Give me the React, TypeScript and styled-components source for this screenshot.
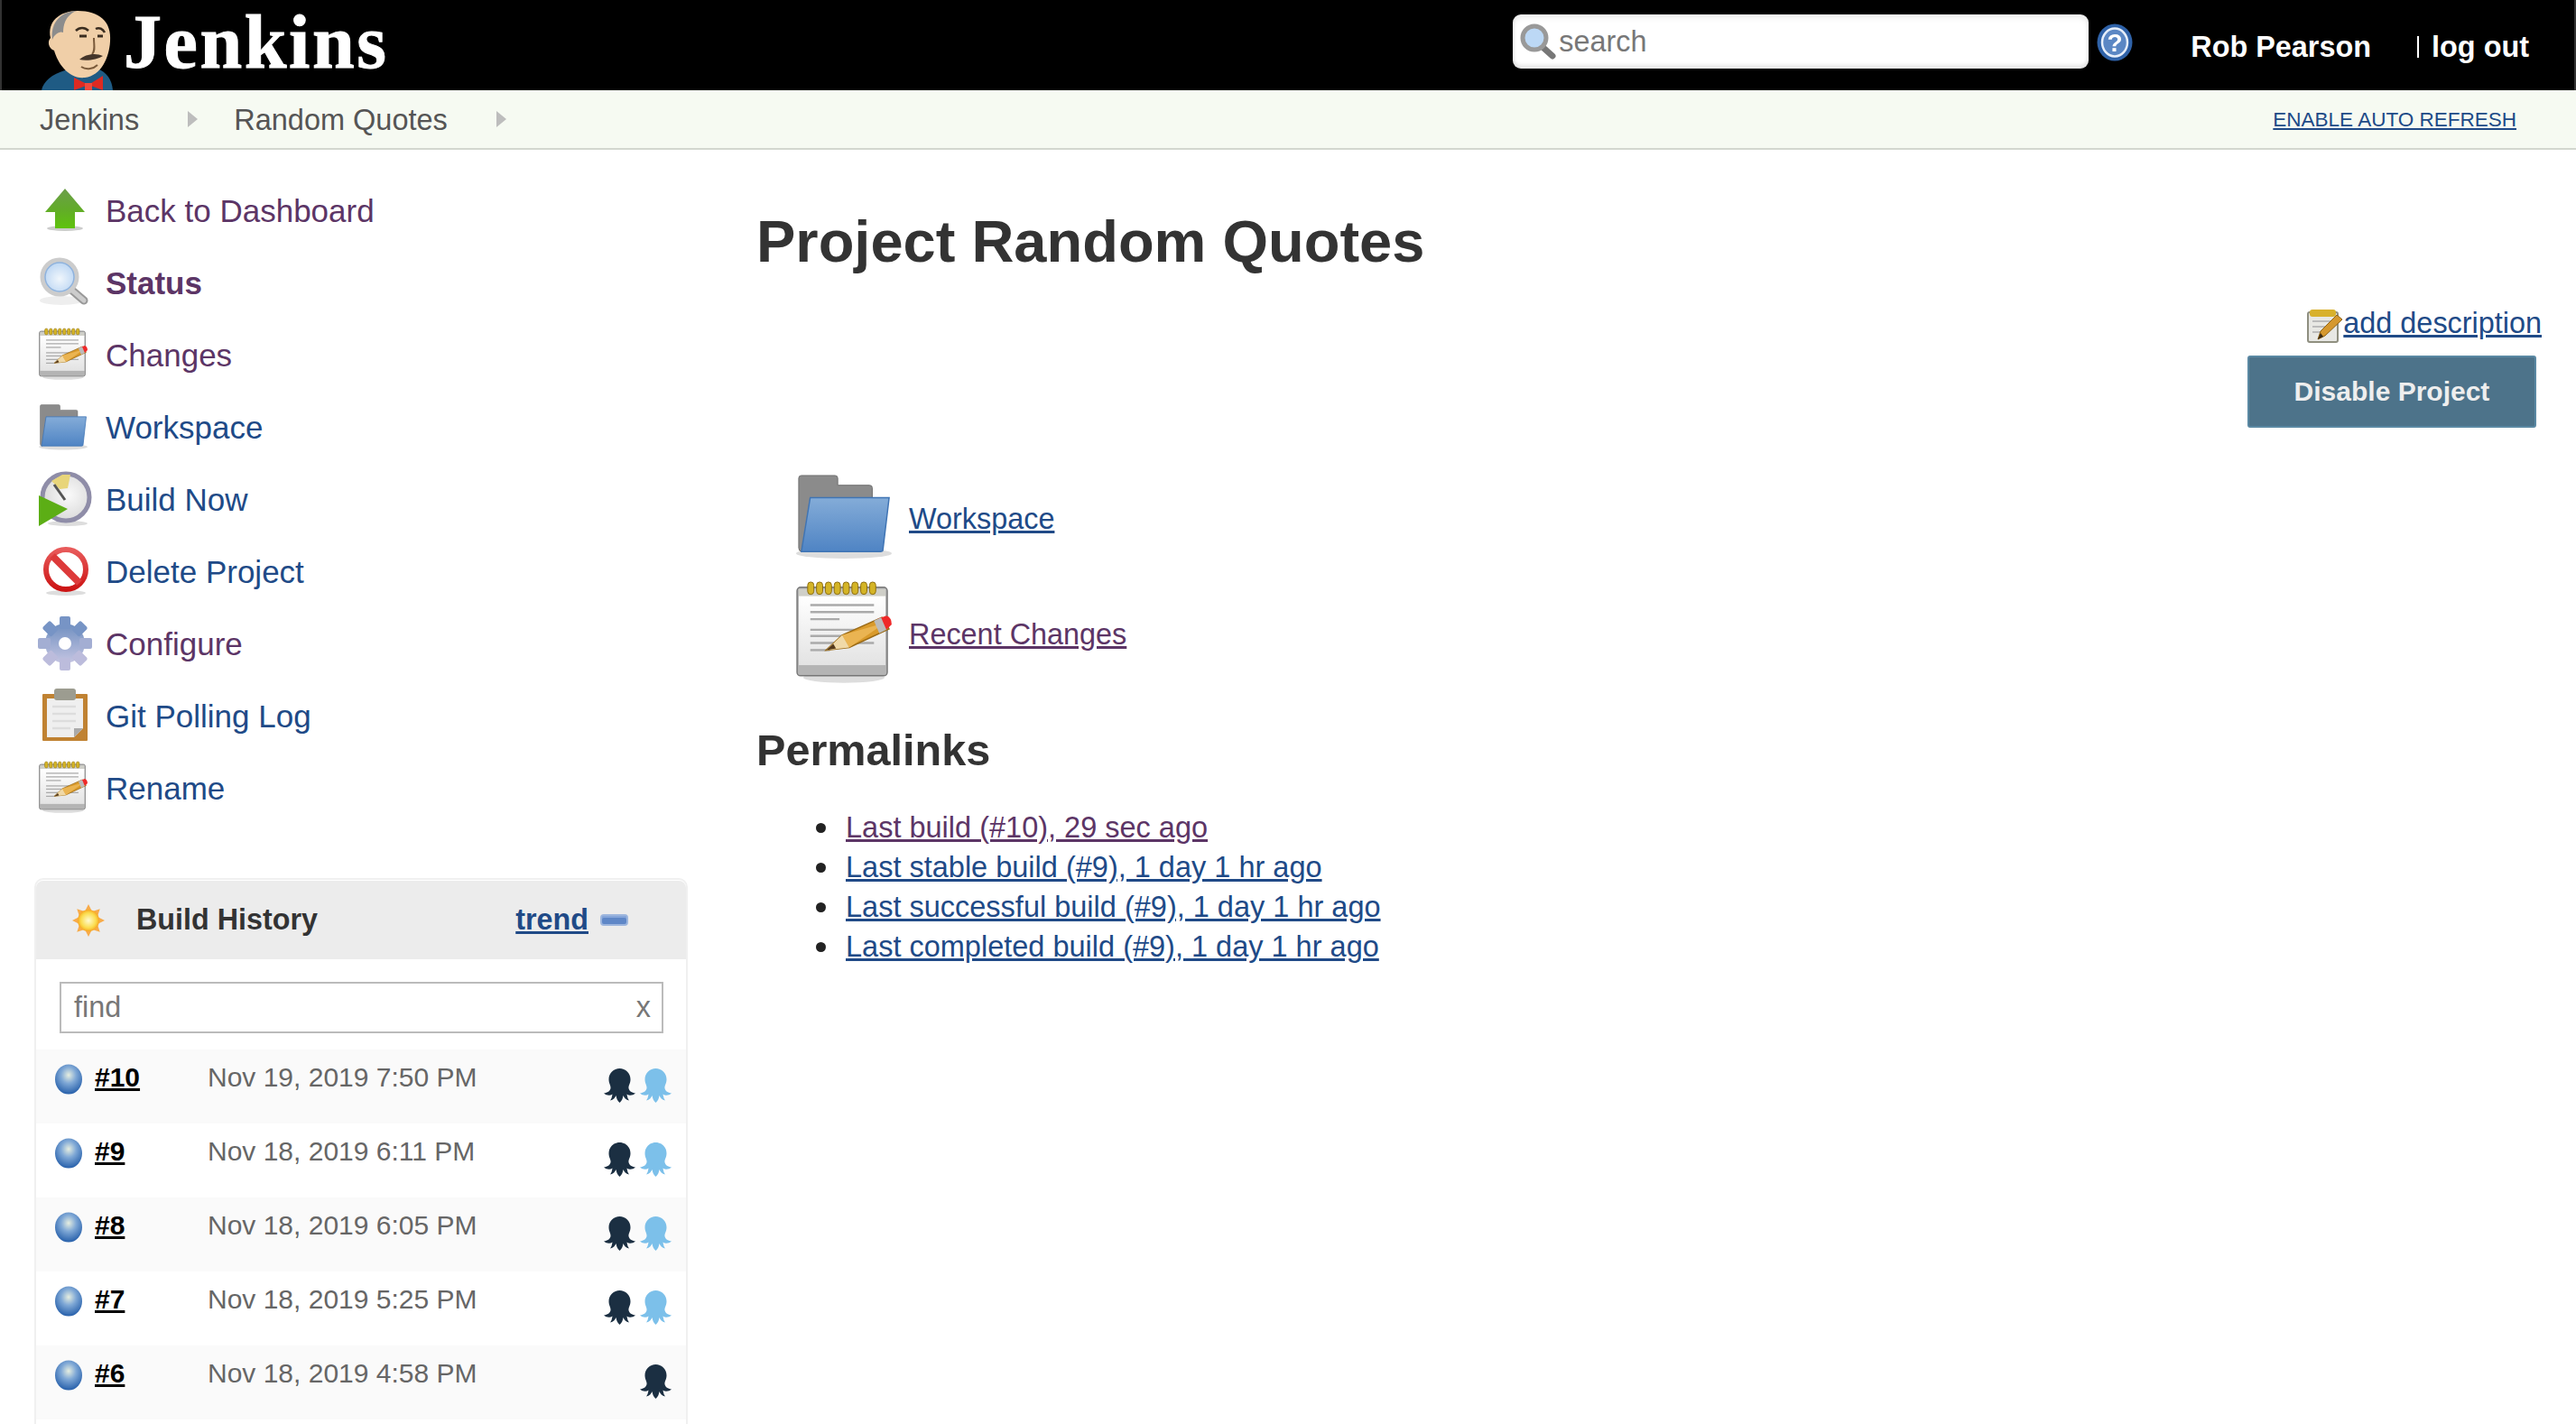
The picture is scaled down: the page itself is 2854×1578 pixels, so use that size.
import React from 'react';
import styled, { createGlobalStyle } from 'styled-components';

const Global = createGlobalStyle`
  html, body { margin: 0; padding: 0; background: #fff; }
  body { font-family: "Liberation Sans", Arial, sans-serif; color: #333; overflow: hidden; }
  * { box-sizing: border-box; }
`;

const BLUE = '#204a87';
const PURPLE = '#5c3566';

const Page = styled.div`
  width: 2854px; height: 1578px; overflow: hidden; display: flex; flex-direction: column;
`;
const Header = styled.header`
  height: 100px; flex: none; background: #000; display: flex; align-items: flex-start;
  border-left: 2px solid #333; border-right: 2px solid #333; padding-left: 42px; overflow: hidden;
`;
const LogoArt = styled.svg`
  width: 84px; height: 90px; margin-top: 10px; flex: none; filter: blur(0.6px);
`;
const LogoText = styled.div`
  font-family: "Liberation Serif", "Times New Roman", serif; font-weight: 700; font-size: 84px;
  line-height: 84px; color: #fff; margin: 5px 0 0 9px; letter-spacing: 2.6px; -webkit-text-stroke: 1px #fff;
`;
const Spacer = styled.div` flex: 1; `;
const SearchBox = styled.div`
  width: 638px; height: 60px; margin-top: 16px; background: #fff; border-radius: 9px; display: flex; align-items: center;
  padding-left: 7px; box-shadow: inset 0 4px 6px rgba(0,0,0,.08), inset 0 -4px 4px rgba(0,0,0,.1);
`;
const SearchInput = styled.input`
  flex: 1; min-width: 0; height: 44px; border: 0; outline: 0; background: transparent; padding: 0 0 0 2px;
  font: 32.400px "Liberation Sans", sans-serif; color: #777;
  &::placeholder { color: #777; opacity: 1; }
`;
const HelpWrap = styled.div` margin: 26px 0 0 9px; width: 40px; height: 42px; flex: none; `;
const UserName = styled.div`
  margin: 34px 0 0 64px; font-size: 32.400px; line-height: 36px; font-weight: 700; color: #fff; white-space: nowrap;
`;
const LogOut = styled.div`
  margin: 34px 50px 0 51px; font-size: 32.400px; line-height: 36px; font-weight: 700; color: #fff; display: flex; align-items: center; white-space: nowrap;
  &::before { content: ''; width: 2px; height: 24px; background: #fff; margin-right: 14px; }
`;
const Crumbs = styled.nav`
  height: 66px; flex: none; background: #f6faf2; border-bottom: 2px solid #d3d7cf; display: flex; align-items: center;
  padding: 2px 66px 0 44px; font-size: 32.500px; color: #555;
`;
const Crumb = styled.span` white-space: nowrap; `;
const CrumbArrow = styled.span`
  width: 0; height: 0; border-left: 11px solid #bdbdbd; border-top: 9px solid transparent; border-bottom: 9px solid transparent;
  margin: -2px 40px 0 54px;
`;
const AutoRefresh = styled.a`
  margin-left: auto; font-size: 22.500px; color: ${BLUE}; text-decoration: underline; white-space: nowrap;
`;
const Main = styled.div` flex: 1; display: flex; min-height: 0; `;
const Side = styled.aside`
  width: 838px; flex: none; padding-top: 27px; display: flex; flex-direction: column;
`;
const NavList = styled.div` display: flex; flex-direction: column; padding-left: 42px; `;
const NavRow = styled.a<{ $visited?: boolean; $bold?: boolean }>`
  height: 80px; display: flex; align-items: center; font-size: 35px; white-space: nowrap; padding-top: 1px;
  color: ${p => (p.$visited ? PURPLE : BLUE)}; font-weight: ${p => (p.$bold ? 700 : 400)};
`;
const NavIcon = styled.span`
  width: 75px; flex: none; display: flex; align-items: center; margin-top: -1px;
  svg { display: block; filter: blur(0.6px); }
`;
const ArrowSlot = styled.span` margin-left: 7px; display: block; `;
const HistoryBox = styled.section`
  width: 724px; margin: 60px 0 0 38px; border: 2px solid #f0f0f0; border-radius: 10px 10px 0 0; padding-bottom: 80px; background: #fff;
`;
const HistoryHead = styled.div`
  height: 87px; background: #ececec; border-radius: 8px 8px 0 0; display: flex; align-items: center; padding-left: 40px;
  font-size: 32.300px; font-weight: 700; color: #333; margin-top: 1px;
`;
const HistoryTitle = styled.span` margin-left: 35px; `;
const Trend = styled.a`
  margin-left: auto; color: ${BLUE}; text-decoration: underline;
`;
const FoldIcon = styled.span`
  width: 31px; height: 13px; margin: 0 64px 0 13px; border-radius: 4px; background: #5f87c7; border: 2px solid #9db6de;
  box-shadow: inset 0 2px 0 #86a6da;
`;
const FindWrap = styled.div` padding: 25px 25px 18px 26px; `;
const FindBox = styled.div`
  height: 57px; border: 2px solid #bbb; display: flex; align-items: center; padding: 0 12px 0 14px;
  font-size: 32.400px; color: #777; justify-content: space-between;
`;
const Row = styled.div<{ $odd: boolean }>`
  height: 82px; display: flex; align-items: flex-start; background: ${p => (p.$odd ? '#fafafa' : '#fff')}; padding: 15px 16px 0 20px;
`;
const BuildNo = styled.a`
  width: 125px; margin: -2px 0 0 12px; font-size: 30px; font-weight: 700; line-height: 36px; color: #000; text-decoration: underline; flex: none;
`;
const BuildDate = styled.span`
  margin-top: -1px; font-size: 30px; line-height: 34px; color: #666; white-space: nowrap;
`;
const Octos = styled.span`
  margin-left: auto; display: flex; gap: 5px; margin-top: 6px;
`;
const Content = styled.main`
  flex: 1; min-width: 0; padding: 62px 38px 0 0; display: flex; flex-direction: column;
`;
const Title = styled.h1`
  margin: 0; font-size: 65px; line-height: 80px; font-weight: 700; color: #333; white-space: nowrap;
`;
const DescRow = styled.div`
  margin: 28px 0 0; height: 44px; display: flex; justify-content: flex-end; align-items: center; font-size: 32.400px;
  svg { display: block; flex: none; margin-top: 6px; filter: blur(0.4px); }
`;
const TextLink = styled.a<{ $visited?: boolean }>`
  color: ${p => (p.$visited ? PURPLE : BLUE)}; text-decoration: underline; white-space: nowrap;
`;
const ButtonRow = styled.div` margin-top: 14px; display: flex; justify-content: flex-end; padding-right: 6px; `;
const PrimaryButton = styled.button`
  width: 320px; height: 80px; background: #4d738a; border: 2px solid #5a88a3; border-radius: 3px; color: #eee;
  font: 700 30px "Liberation Sans", sans-serif;
`;
const BigLinks = styled.div` margin-top: 50px; display: flex; flex-direction: column; gap: 24px; padding-left: 42px; `;
const BigLink = styled.div<{ $h: number }>`
  display: flex; align-items: center; height: ${p => p.$h}px; font-size: 32.400px;
  svg { display: block; flex: none; margin-right: 17px; filter: blur(0.4px); }
`;
const BigLabel = styled.span<{ $drop: number }>` padding-top: ${p => p.$drop}px; `;
const SubTitle = styled.h2`
  margin: 43px 0 0; font-size: 48.600px; line-height: 60px; font-weight: 700; color: #333;
`;
const PermaList = styled.ul`
  margin: 34px 0 0; padding: 0 0 0 66px; font-size: 32.500px; line-height: 44px; list-style: none;
`;
const PermaItem = styled.li`
  display: flex; align-items: center;
  &::before { content: ''; width: 11px; height: 11px; border-radius: 50%; background: #222; margin-right: 22px; flex: none; }
`;

const Octo = ({ color }: { color: string }) => (
  <svg width="35" height="38" viewBox="0 0 35 38" fill={color}>
    <path d="M5.500 12C5.500 5 11 0 17.500 0S29.500 5 29.500 12C29.500 17 27 19 27.500 22 28 25 31 27 35 27.500 32 30 28 30.500 25.500 28.500 26 31.500 26.500 33.500 28 35.500 24.500 35 22.500 32.500 21.500 30 21 33 20 36 17.500 38 15 36 14 33 13.500 30 12.500 32.500 10.500 35 7 35.500 8.500 33.500 9 31.500 9.500 28.500 7 30.500 3 30 0 27.500 4 27 7 25 7.500 22 8 19 5.500 17 5.500 12z" />
  </svg>
);

const BallSvg = styled.svg` filter: blur(0.7px); display: block; flex: none; `;
const Ball = () => (
  <BallSvg width="33" height="36" viewBox="0 0 33 36">
    <defs>
      <radialGradient id="ballG" cx="50%" cy="36%" r="62%">
        <stop offset="0" stopColor="#e6eee0" />
        <stop offset=".45" stopColor="#7fa8d6" />
        <stop offset="1" stopColor="#2c64ad" />
      </radialGradient>
    </defs>
    <ellipse cx="16" cy="18" rx="15" ry="16.500" fill="url(#ballG)" />
  </BallSvg>
);

const ArrowIcon = () => (
  <svg width="46" height="50" viewBox="0 0 46 50">
    <defs>
      <linearGradient id="arG" x1="0" y1="0" x2="0" y2="1">
        <stop offset="0" stopColor="#6c9e4b" />
        <stop offset=".5" stopColor="#62ab2a" />
        <stop offset="1" stopColor="#5fc30c" />
      </linearGradient>
    </defs>
    <ellipse cx="23" cy="45" rx="20" ry="3" fill="#ccc" />
    <path d="M23 1 45 27H34V45H12V27H1z" fill="url(#arG)" />
  </svg>
);

const Magnifier = () => (
  <svg width="58" height="56" viewBox="0 0 58 56">
    <defs>
      <radialGradient id="mgG" cx="50%" cy="55%" r="55%">
        <stop offset="0" stopColor="#f0f6fc" />
        <stop offset="1" stopColor="#b5d2f2" />
      </radialGradient>
    </defs>
    <ellipse cx="26" cy="48" rx="24" ry="5" fill="#eee" />
    <line x1="37" y1="36" x2="51" y2="48" stroke="#999" strokeWidth="9" strokeLinecap="round" />
    <line x1="37" y1="36" x2="51" y2="48" stroke="#ccc" strokeWidth="5" strokeLinecap="round" />
    <circle cx="24" cy="22" r="19" fill="url(#mgG)" stroke="#ccc" strokeWidth="5" />
    <circle cx="24" cy="22" r="16" fill="none" stroke="#8fb2dc" strokeWidth="1.500" />
  </svg>
);

const Notepad = ({ size = 56, id }: { size?: number; id: string }) => (
  <svg width={size} height={size * 1.06} viewBox="0 0 112 119">
    <defs>
      <linearGradient id={id} x1="0" y1="0" x2="0" y2="1">
        <stop offset="0" stopColor="#fff" />
        <stop offset="1" stopColor="#e3e3e3" />
      </linearGradient>
    </defs>
    <ellipse cx="56" cy="110" rx="46" ry="6" fill="#ddd" />
    <rect x="3" y="8" width="102" height="100" rx="4" fill="#b4b4b4" stroke="#777" strokeWidth="1.500" />
    <rect x="5" y="10" width="98" height="10" fill="#cfcfc8" />
    <rect x="5" y="18" width="98" height="78" fill={`url(#${id})`} />
    {[0, 1, 2, 3, 4, 5, 6, 7].map(i => (
      <rect key={i} x={15 + i * 10} y="2" width="7" height="14" rx="3.500" fill="#d4b426" stroke="#8c6d10" strokeWidth="1" />
    ))}
    <g stroke="#aaa" strokeWidth="2.500">
      <line x1="18" y1="28" x2="90" y2="28" />
      <line x1="18" y1="36" x2="90" y2="36" />
      <line x1="18" y1="44" x2="51" y2="44" />
      <line x1="18" y1="56" x2="70" y2="56" />
      <line x1="18" y1="63" x2="55" y2="63" />
      <line x1="18" y1="71" x2="90" y2="71" />
      <line x1="18" y1="79" x2="40" y2="79" />
    </g>
    <path d="M36 79 54 62 99 42 107 55 62 76z" fill="#d99a2b" stroke="#9a6a16" strokeWidth="1.500" />
    <path d="M54 62 103 48 62 76z" fill="#eab452" />
    <path d="M36 79 54 62 62 76z" fill="#f0d9a8" />
    <path d="M36 79 44 72 47 77z" fill="#55391a" />
    <path d="M94 44 104 40Q110 42 110 50L104 56z" fill="#ef2929" />
    <path d="M90 46 98 42 104 56 96 60z" fill="#bbb" />
  </svg>
);

const EditIcon = () => (
  <svg width="40" height="38" viewBox="0 0 40 38">
    <rect x="1" y="4" width="33" height="33" rx="2" fill="#e8e8e4" stroke="#8f8f80" strokeWidth="2" />
    <rect x="3" y="1" width="29" height="8" rx="3" fill="#d8b12c" />
    <g stroke="#bbb" strokeWidth="2">
      <line x1="6" y1="14" x2="28" y2="14" />
      <line x1="6" y1="20" x2="22" y2="20" />
      <line x1="6" y1="26" x2="16" y2="26" />
    </g>
    <path d="M12 34 15 25 33 7 39 12 20 30z" fill="#d5982e" stroke="#8f6315" strokeWidth="1" />
    <path d="M12 34 15 27 18 31z" fill="#3a2a14" />
  </svg>
);

const Folder = ({ w, h, id }: { w: number; h: number; id: string }) => (
  <svg width={w} height={h} viewBox="0 0 112 98" preserveAspectRatio="none">
    <defs>
      <linearGradient id={id} x1="0" y1="0" x2="0" y2="1">
        <stop offset="0" stopColor="#84acd8" />
        <stop offset="1" stopColor="#4f84c4" />
      </linearGradient>
    </defs>
    <ellipse cx="56" cy="91" rx="54" ry="6" fill="#ddd" />
    <path d="M5 6a3 3 0 0 1 3-3H46a3 3 0 0 1 3 3V14H85a3 3 0 0 1 3 3V40L9 89Q5 89 5 85z" fill="#8b8b8b" stroke="#6f6f6f" strokeWidth="1" />
    <path d="M18 28H107L100 87Q100 89 97 89H8z" fill={`url(#${id})`} stroke="#3f74b4" strokeWidth="1.500" />
  </svg>
);

const ClockIcon = () => (
  <svg width="60" height="62" viewBox="0 0 60 62">
    <defs>
      <radialGradient id="ckG" cx="55%" cy="45%" r="60%">
        <stop offset="0" stopColor="#fafafa" />
        <stop offset="1" stopColor="#d8d8d8" />
      </radialGradient>
    </defs>
    <ellipse cx="33" cy="58" rx="22" ry="3" fill="#ddd" />
    <circle cx="31" cy="29" r="26" fill="url(#ckG)" stroke="#8f8da8" strokeWidth="5" />
    <path d="M27 4 36 4 33 19 24 20 15 11z" fill="#e8d57a" />
    <path d="M18 15 30 32" stroke="#555" strokeWidth="3" />
    <path d="M1 27 33 42 1 61z" fill="#5cae15" />
  </svg>
);

const DeleteSvg = styled.svg` margin-left: 4px; `;
const DeleteIcon = () => (
  <DeleteSvg width="54" height="56" viewBox="0 0 54 56">
    <defs>
      <linearGradient id="dlG" x1="0" y1="0" x2="0" y2="1">
        <stop offset="0" stopColor="#e85a5a" />
        <stop offset="1" stopColor="#cc1414" />
      </linearGradient>
    </defs>
    <ellipse cx="27" cy="52" rx="22" ry="3" fill="#ddd" />
    <circle cx="27" cy="26" r="22" fill="#fff" stroke="url(#dlG)" strokeWidth="6" />
    <line x1="12" y1="11" x2="42" y2="41" stroke="#dd3a3a" strokeWidth="8" />
  </DeleteSvg>
);

const GearIcon = () => (
  <svg width="60" height="60" viewBox="0 0 60 60">
    <defs>
      <linearGradient id="geG" x1="0" y1="0" x2="0" y2="1">
        <stop offset="0" stopColor="#6f8fc0" />
        <stop offset="1" stopColor="#c5c5e2" />
      </linearGradient>
    </defs>
    <circle cx="30" cy="30" r="22" fill="url(#geG)" />
    {[0, 45, 90, 135, 180, 225, 270, 315].map((a, i) => (
      <rect key={a} x="24" y="0" width="12" height="14" rx="2" fill={i > 2 && i < 6 ? '#bcbcdc' : i === 2 || i === 6 ? '#a3aed3' : '#7794c5'} transform={`rotate(${a} 30 30)`} />
    ))}
    <circle cx="30" cy="30" r="7" fill="#fff" />
  </svg>
);

const ClipSvg = styled.svg` margin-left: 4px; `;
const ClipboardIcon = () => (
  <ClipSvg width="54" height="60" viewBox="0 0 54 60">
    <rect x="1" y="6" width="50" height="52" rx="1" fill="#c08232" />
    <path d="M6 11H46V44L36 54H6z" fill="#efefef" />
    <path d="M46 44 36 54V44z" fill="#aaa" />
    <rect x="14" y="0" width="24" height="13" rx="3" fill="#9c9c90" />
    <g stroke="#ddd" strokeWidth="2.500">
      <line x1="12" y1="20" x2="38" y2="20" />
      <line x1="12" y1="28" x2="38" y2="28" />
      <line x1="12" y1="36" x2="38" y2="36" />
      <line x1="12" y1="44" x2="32" y2="44" />
    </g>
  </ClipSvg>
);

const SunSvg = styled.svg` display: block; flex: none; filter: blur(0.5px); `;
const Sun = () => (
  <SunSvg width="36" height="36" viewBox="0 0 36 36">
    <defs>
      <radialGradient id="snG" cx="50%" cy="50%" r="50%">
        <stop offset="0" stopColor="#fffbd0" />
        <stop offset=".7" stopColor="#fbdc4c" />
        <stop offset="1" stopColor="#f6a623" />
      </radialGradient>
    </defs>
    {[0, 45, 90, 135, 180, 225, 270, 315].map(a => (
      <path key={a} d="M18 0 22 8H14z" fill="#f7ab4a" transform={`rotate(${a} 18 18)`} />
    ))}
    <circle cx="18" cy="18" r="12" fill="url(#snG)" />
  </SunSvg>
);

const GlyphSvg = styled.svg` flex: none; filter: blur(0.4px); `;
const SearchGlyph = () => (
  <GlyphSvg width="42" height="40" viewBox="0 0 42 40">
    <line x1="27" y1="27" x2="37" y2="36" stroke="#777" strokeWidth="7" strokeLinecap="round" />
    <circle cx="17" cy="16" r="13" fill="#bcd8f5" stroke="#999" strokeWidth="5" />
  </GlyphSvg>
);

const HelpSvg = styled.svg` display: block; filter: blur(0.4px); `;
const HelpIcon = () => (
  <HelpSvg width="40" height="42" viewBox="0 0 40 42">
    <ellipse cx="20" cy="21" rx="19.500" ry="20.500" fill="#2f62a8" />
    <ellipse cx="20" cy="21" rx="14" ry="15.500" fill="#5b87c4" stroke="#e6eefa" strokeWidth="2.500" />
    <text x="20" y="31" textAnchor="middle" fontFamily="Liberation Sans" fontWeight="700" fontSize="28" fill="#fff">?</text>
  </HelpSvg>
);

const Mr = () => (
  <LogoArt viewBox="0 0 84 90">
    <path d="M2 90C4 80 14 72 28 68L64 66C74 70 80 78 81 90z" fill="#1f5b84" />
    <path d="M12 32C8 14 22 2 42 2 66 2 80 14 78 36 77 54 68 74 50 76 32 78 20 60 16 46 10 44 8 36 12 32z" fill="#f0cfa8" />
    <path d="M14 34C12 18 20 4 40 2 28 8 26 18 26 26 22 24 16 28 14 34z" fill="#8c8c8c" />
    <path d="M40 24C44 20 50 20 54 24M62 22C66 20 70 22 72 26" stroke="#3a2d20" strokeWidth="2.500" fill="none" />
    <path d="M44 30 52 30M64 30 70 30" stroke="#3a2d20" strokeWidth="3" />
    <path d="M60 32C60 40 62 46 58 50" stroke="#7a5a3a" strokeWidth="2" fill="none" />
    <path d="M44 56C50 50 62 48 70 52 64 56 52 58 44 56z" fill="#44352a" />
    <path d="M46 64C52 68 60 66 64 62" stroke="#7a5a3a" strokeWidth="2" fill="none" />
    <path d="M38 76 54 84 38 90zM70 74 54 84 70 90z" fill="#dd2a22" />
    <rect x="50" y="82" width="8" height="8" fill="#ee4a3c" />
  </LogoArt>
);

const builds = [
  { n: '#10', d: 'Nov 19, 2019 7:50 PM', o: 2 },
  { n: '#9', d: 'Nov 18, 2019 6:11 PM', o: 2 },
  { n: '#8', d: 'Nov 18, 2019 6:05 PM', o: 2 },
  { n: '#7', d: 'Nov 18, 2019 5:25 PM', o: 2 },
  { n: '#6', d: 'Nov 18, 2019 4:58 PM', o: 1 },
];

export default function App() {
  return (
    <Page>
      <Global />
      <Header>
        <Mr />
        <LogoText>Jenkins</LogoText>
        <Spacer />
        <SearchBox>
          <SearchGlyph />
          <SearchInput placeholder="search" />
        </SearchBox>
        <HelpWrap><HelpIcon /></HelpWrap>
        <UserName>Rob Pearson</UserName>
        <LogOut>log out</LogOut>
      </Header>
      <Crumbs>
        <Crumb>Jenkins</Crumb>
        <CrumbArrow />
        <Crumb>Random Quotes</Crumb>
        <CrumbArrow />
        <AutoRefresh>ENABLE AUTO REFRESH</AutoRefresh>
      </Crumbs>
      <Main>
        <Side>
          <NavList>
            <NavRow $visited><NavIcon><ArrowSlot><ArrowIcon /></ArrowSlot></NavIcon>Back to Dashboard</NavRow>
            <NavRow $visited $bold><NavIcon><Magnifier /></NavIcon>Status</NavRow>
            <NavRow $visited><NavIcon><Notepad id="np1" /></NavIcon>Changes</NavRow>
            <NavRow><NavIcon><Folder w={56} h={52} id="fd1" /></NavIcon>Workspace</NavRow>
            <NavRow><NavIcon><ClockIcon /></NavIcon>Build Now</NavRow>
            <NavRow><NavIcon><DeleteIcon /></NavIcon>Delete Project</NavRow>
            <NavRow $visited><NavIcon><GearIcon /></NavIcon>Configure</NavRow>
            <NavRow><NavIcon><ClipboardIcon /></NavIcon>Git Polling Log</NavRow>
            <NavRow><NavIcon><Notepad id="np2" /></NavIcon>Rename</NavRow>
          </NavList>
          <HistoryBox>
            <HistoryHead>
              <Sun />
              <HistoryTitle>Build History</HistoryTitle>
              <Trend>trend</Trend>
              <FoldIcon />
            </HistoryHead>
            <FindWrap>
              <FindBox><span>find</span><span>x</span></FindBox>
            </FindWrap>
            {builds.map((b, i) => (
              <Row key={b.n} $odd={i % 2 === 0}>
                <Ball />
                <BuildNo>{b.n}</BuildNo>
                <BuildDate>{b.d}</BuildDate>
                <Octos>
                  <Octo color="#1b2f42" />
                  {b.o === 2 && <Octo color="#7cc0ea" />}
                </Octos>
              </Row>
            ))}
          </HistoryBox>
        </Side>
        <Content>
          <Title>Project Random Quotes</Title>
          <DescRow>
            <EditIcon />
            <TextLink>add description</TextLink>
          </DescRow>
          <ButtonRow><PrimaryButton>Disable Project</PrimaryButton></ButtonRow>
          <BigLinks>
            <BigLink $h={96}><Folder w={110} h={96} id="fd2" /><BigLabel $drop={7}><TextLink>Workspace</TextLink></BigLabel></BigLink>
            <BigLink $h={114}><Notepad size={110} id="np4" /><BigLabel $drop={4}><TextLink $visited>Recent Changes</TextLink></BigLabel></BigLink>
          </BigLinks>
          <SubTitle>Permalinks</SubTitle>
          <PermaList>
            <PermaItem><TextLink $visited>Last build (#10), 29 sec ago</TextLink></PermaItem>
            <PermaItem><TextLink>Last stable build (#9), 1 day 1 hr ago</TextLink></PermaItem>
            <PermaItem><TextLink>Last successful build (#9), 1 day 1 hr ago</TextLink></PermaItem>
            <PermaItem><TextLink>Last completed build (#9), 1 day 1 hr ago</TextLink></PermaItem>
          </PermaList>
        </Content>
      </Main>
    </Page>
  );
}
